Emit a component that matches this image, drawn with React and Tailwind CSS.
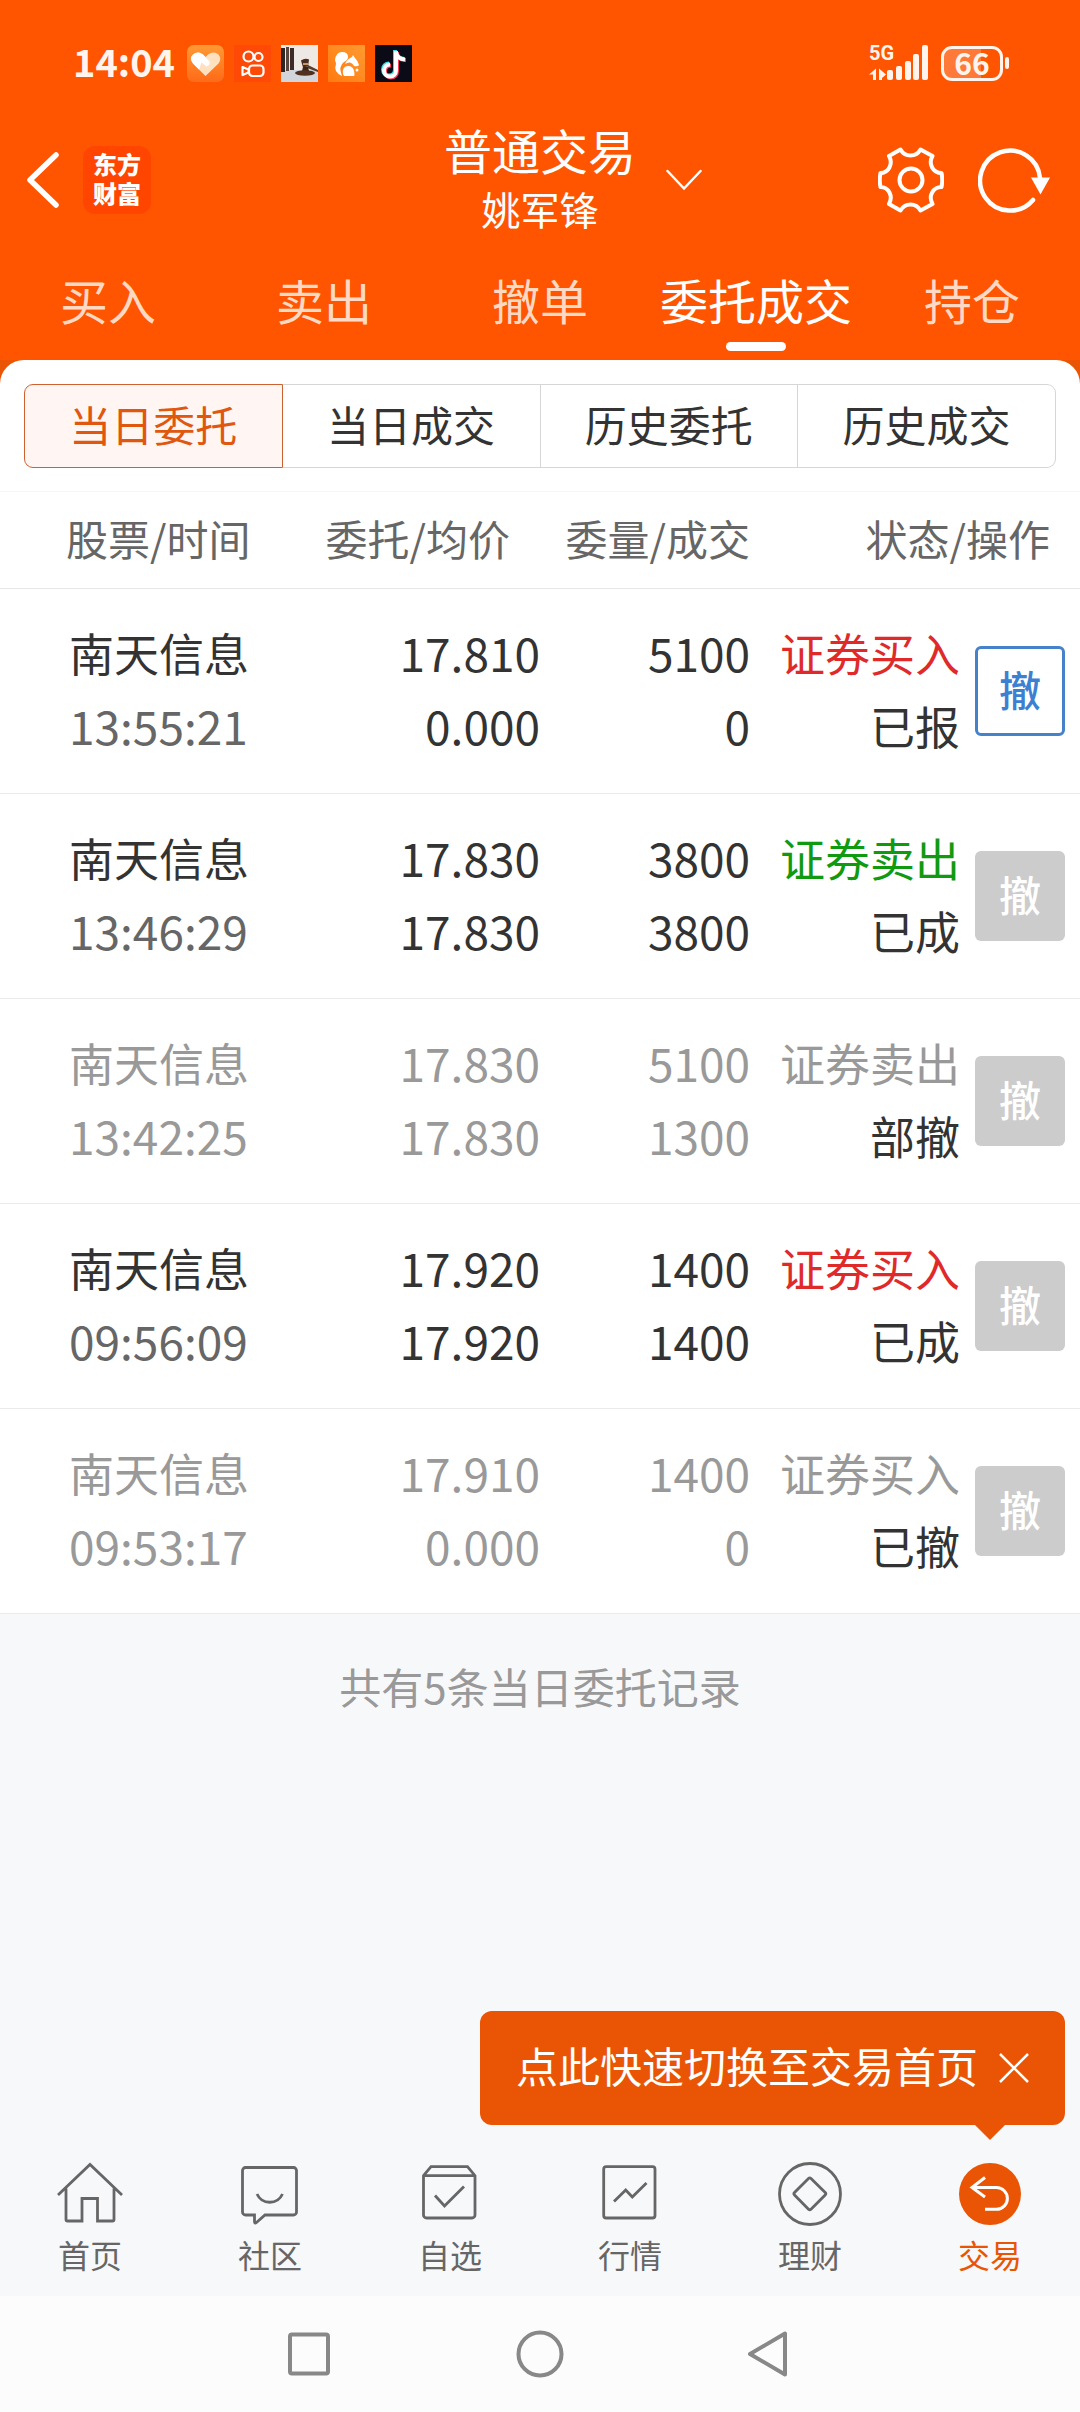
import { useState } from "react";
import clsx from "clsx";

const tabs = ["买入", "卖出", "撤单", "委托成交", "持仓"];
const segments = ["当日委托", "当日成交", "历史委托", "历史成交"];

const orders = [
  { name: "南天信息", time: "13:55:21", price: "17.810", avg: "0.000", amount: "5100", filled: "0", side: "证券买入", status: "已报", open: true },
  { name: "南天信息", time: "13:46:29", price: "17.830", avg: "17.830", amount: "3800", filled: "3800", side: "证券卖出", status: "已成" },
  { name: "南天信息", time: "13:42:25", price: "17.830", avg: "17.830", amount: "5100", filled: "1300", side: "证券卖出", status: "部撤", muted: true },
  { name: "南天信息", time: "09:56:09", price: "17.920", avg: "17.920", amount: "1400", filled: "1400", side: "证券买入", status: "已成" },
  { name: "南天信息", time: "09:53:17", price: "17.910", avg: "0.000", amount: "1400", filled: "0", side: "证券买入", status: "已撤", muted: true },
];

const navIcons = {
  首页: (
    <path d="M1 34 33 3.500l32 30.500M9 27.500V58.500a1.500 1.500 0 0 0 1.500 1.500H25V37.500h15.500V60H55.500a1.500 1.500 0 0 0 1.500-1.500V27.500" />
  ),
  社区: (
    <>
      <path d="M8.500 6.500h48a3 3 0 0 1 3 3v41.500a3 3 0 0 1-3 3H28l-8.500 7.500q-2 1.500-2-1V54h-9a3 3 0 0 1-3-3V9.500a3 3 0 0 1 3-3z" />
      <path d="M20 33c5 11 20.500 11 25.500 0" />
    </>
  ),
  自选: (
    <>
      <path d="M6.500 14.700 14 5.700H50.500l7.500 9V54a3 3 0 0 1-3 3H9.500a3 3 0 0 1-3-3zH58" />
      <path d="M18 34.500 27.500 45 47 25.500" />
    </>
  ),
  行情: (
    <>
      <rect x="6.700" y="5.700" width="51.300" height="51.300" rx="2.500" />
      <path d="m17 40.500 11.700-11.500 6.600 7L49.500 22" />
    </>
  ),
  理财: (
    <>
      <circle cx="33" cy="33" r="30.500" />
      <path d="M31.500 17.500a1.800 1.800 0 0 1 2.500 0l14.200 14a1.800 1.800 0 0 1 0 2.500L34 48.200a1.800 1.800 0 0 1-2.500 0L17.500 34a1.800 1.800 0 0 1 0-2.500z" />
    </>
  ),
  交易: (
    <>
      <circle cx="33" cy="33" r="31" fill="currentColor" stroke="none" />
      <path stroke="#fff" strokeWidth="3" d="M28 16.500 15 26.500l13 9.500M15 26.500h24.500a10.900 10.900 0 0 1 0 21.800H28" />
    </>
  ),
};

function AppBadges() {
  return (
    <div className="flex gap-[10px]">
      <svg className="size-[37px]" viewBox="0 0 37 37">
        <defs>
          <linearGradient id="heartBg" x1="0" y1="0" x2="0" y2="1">
            <stop offset="0" stopColor="#ff9a35" />
            <stop offset="1" stopColor="#ff6a18" />
          </linearGradient>
        </defs>
        <rect width="37" height="37" rx="7" fill="url(#heartBg)" />
        <path d="M18.500 31 6 18.500Q2 13 6 9.500q5-4 10 0l2.500 2.500 2.500-2.500q6-4 10.500 0 3.500 4.500 0 9z" fill="#ffe0bf" />
        <path d="M6 18.500Q2 13 6 9.500q5-4 10 0l6.500 7q1 4-3 5l-5-4-2.500 7z" fill="#fff" />
      </svg>
      <svg className="size-[37px]" viewBox="0 0 37 37" fill="none" stroke="#fff" strokeWidth="2.200" strokeLinejoin="round">
        <rect width="37" height="37" fill="#ff4906" stroke="none" />
        <circle cx="14.500" cy="11.500" r="5" />
        <circle cx="24.500" cy="12" r="4" />
        <rect x="15" y="20.500" width="14.500" height="10.500" rx="3.500" />
        <path d="m8.500 22 6 2.500v3l-6 2.500z" />
      </svg>
      <svg className="size-[37px]" viewBox="0 0 37 37">
        <rect width="37" height="37" fill="#eee9e4" />
        <rect width="37" height="12" y="25" fill="#d3d5dc" />
        <path d="M0 3h4v24H0z" fill="#2c2725" />
        <path d="M5 2h3v24H5z" fill="#5a4740" />
        <path d="M9 3h4v22H9z" fill="#3c2b26" />
        <path d="M20 15.500q4-3 8-1l-1 7-5 1z" fill="#4a2d1c" />
        <path d="M22 18h5v2h-5z" fill="#c79a62" />
        <path d="m27 20 10 5v2l-11-4z" fill="#5b3d2b" />
        <path d="M22 22h5l1 4h-7z" fill="#3c2418" />
        <ellipse cx="24" cy="28" rx="10" ry="2.800" fill="#50301f" />
      </svg>
      <svg className="size-[37px]" viewBox="0 0 37 37">
        <defs>
          <linearGradient id="squirrelBg" x1="0" y1="1" x2="1" y2="0">
            <stop offset="0" stopColor="#ff7a10" />
            <stop offset="1" stopColor="#ff9a30" />
          </linearGradient>
        </defs>
        <rect width="37" height="37" fill="url(#squirrelBg)" />
        <path d="M14 31Q5 27 8 19q0-1-1-4 1-8 7-8 6 0 6 5 0 3-4 5-6 4-2 14z" fill="#fff" />
        <path d="M17 19q2-5 7-7l1-2 2 3q3 3 4 7-1 2-5 1-3-6-9-2z" fill="#fff" />
        <path d="M15 29q-1-8 5-8 5 0 6 5 1 4 0 5H16z" fill="#fff" />
        <circle cx="29" cy="25" r="1.500" fill="#fff" />
      </svg>
      <svg className="size-[37px]" viewBox="0 0 37 37" fill="none" strokeWidth="4">
        <rect width="37" height="37" fill="#0b0b18" />
        <path stroke="#2de2e0" d="M20 5v19.500a6 6 0 1 1-6-6M20 6q1 7 9 8" />
        <path stroke="#fb3a5c" d="M22 7v19.500a6 6 0 1 1-6-6M22 8q1 7 9 7" />
        <path stroke="#fff" d="M21 6v19.500a6 6 0 1 1-6-6M21 7q1 7 9 7.500" />
      </svg>
    </div>
  );
}

function StatusBar() {
  return (
    <div className="flex h-[118px] items-center justify-between pt-2 pl-[73px] pr-[71px] text-[#fff5ee]">
      <div className="flex items-center gap-3">
        <span className="pb-1 text-[38px] leading-[40px] font-bold">14:04</span>
        <AppBadges />
      </div>
      <div className="flex items-center gap-[13px]">
        <div className="relative">
          <span className="absolute -top-[2px] left-0 font-[Roboto] text-[20px] leading-[20px] font-bold">5G</span>
          <svg className="h-[36px] w-[59px]" viewBox="0 0 59 36" fill="currentColor">
            <path d="M0 29.500 7 23.500V35H4v-5.500zM10 23.500 17 29.500 13 33v2h-3z" />
            <rect x="18" y="25" width="6" height="10" rx="2" />
            <rect x="27" y="21" width="6" height="14" rx="2" />
            <rect x="36" y="16" width="6" height="19" rx="2" />
            <rect x="44" y="9" width="6" height="26" rx="2" />
            <rect x="53" y="0" width="6" height="35" rx="2" />
          </svg>
        </div>
        <div className="flex items-center gap-[2px]">
          <div className="flex h-[35px] w-[62px] items-center justify-center rounded-[11px] border-3 border-current bg-linear-to-r from-[#ff7a38] from-66% to-[#ff5500] to-66% pb-[3px] text-[30px] leading-[32px] font-bold">
            66
          </div>
          <div className="h-3 w-1 rounded-sm bg-current"></div>
        </div>
      </div>
    </div>
  );
}

function TitleBar() {
  return (
    <div className="grid h-[120px] grid-cols-[1fr_auto_1fr] items-center text-white">
      <div className="flex items-center gap-6 pl-[26px]">
        <button aria-label="返回">
          <svg className="h-[56px] w-[33px]" viewBox="0 0 33 56" fill="none" stroke="currentColor" strokeWidth="5.500" strokeLinecap="round" strokeLinejoin="round">
            <path d="M30 3 4 28l26 25" />
          </svg>
        </button>
        <div className="flex size-[68px] items-center justify-center rounded-xl bg-[#ff4500] pb-1">
          <p className="w-12 text-[24px] leading-[29px] font-black">东方财富</p>
        </div>
      </div>
      <div className="pb-[5px] text-center">
        <h1 className="text-[48px] leading-[62px]">普通交易</h1>
        <p className="text-[39px] leading-[56px]">姚军锋</p>
      </div>
      <div className="flex items-center justify-between pl-[30px] pr-[28px]">
        <button aria-label="切换账户">
          <svg className="h-[22px] w-[36px]" viewBox="0 0 36 22" fill="none" stroke="currentColor" strokeWidth="2.500" strokeLinecap="round">
            <path d="M1.500 2 18 19.500 34.500 2" />
          </svg>
        </button>
        <div className="flex gap-[34px]">
          <button aria-label="设置">
            <svg className="size-[66px]" viewBox="0 0 66 66" fill="none" stroke="currentColor" strokeWidth="4" strokeLinejoin="round">
              <path d="M22.500 2.500C27 10.500 38 10.500 42.500 2.500L54.500 9C50 17 55 26 63.500 26Q65 33 63.500 40C55 40 50 49 54.500 57L42.500 63.500C38 55.500 27 55.500 22.500 63.500L11 57C15.500 49 10.500 40 2.500 40Q1 33 2.500 26C10.500 26 15.500 17 11 9Z" />
              <circle cx="33" cy="33" r="11.500" />
            </svg>
          </button>
          <button aria-label="刷新">
            <svg className="h-[66px] w-[74px]" viewBox="0 0 74 66" fill="none" stroke="currentColor" strokeWidth="4.500">
              <path d="M62 31A30 30 0 1 0 55 53" strokeLinecap="round" />
              <path d="M53 30.500H72L62.500 47.500z" fill="currentColor" stroke="none" />
            </svg>
          </button>
        </div>
      </div>
    </div>
  );
}

function OrderRow({ order }) {
  const text = order.muted ? "text-[#999]" : "text-[#333]";
  const side = order.side === "证券买入" ? "text-[#e02a2a]" : "text-[#0f9a0f]";

  return (
    <tr className="border-b border-[#ebebeb] text-right text-[45px] leading-[73px]">
      <td className={clsx("pt-[27px] pb-[31px] pl-[69px] text-left", text)}>
        <div>{order.name}</div>
        <div className={clsx("text-[46px]", !order.muted && "text-[#666]")}>{order.time}</div>
      </td>
      <td className={clsx("pt-[27px] pb-[31px] text-[46px]", text)}>
        <div>{order.price}</div>
        <div>{order.avg}</div>
      </td>
      <td className={clsx("pt-[27px] pb-[31px] text-[46px]", text)}>
        <div>{order.amount}</div>
        <div>{order.filled}</div>
      </td>
      <td className="pt-[27px] pb-[31px] text-[#333]">
        <div className={order.muted ? "text-[#999]" : side}>{order.side}</div>
        <div>{order.status}</div>
      </td>
      <td className="pr-[15px] align-middle">
        <button
          disabled={!order.open}
          className={clsx(
            "ml-auto flex size-[90px] items-center justify-center rounded-md pb-1 text-[42px] leading-[60px] font-medium",
            order.open ? "border-3 border-[#4582c9] bg-white text-[#3c80d2]" : "bg-[#ccc] text-white"
          )}
        >
          撤
        </button>
      </td>
    </tr>
  );
}

function BottomNav() {
  const [tip, setTip] = useState(true);

  return (
    <nav className="relative flex">
      {tip ? (
        <div className="absolute right-[15px] bottom-full mb-6 flex h-[114px] items-center gap-[21px] rounded-xl bg-[#e95504] pr-9 pl-9 text-[42px] leading-[60px] whitespace-nowrap text-white">
          <span className="pb-[6px]">点此快速切换至交易首页</span>
          <button aria-label="关闭" onClick={() => setTip(false)}>
            <svg className="size-[30px]" viewBox="0 0 30 30" fill="none" stroke="currentColor" strokeWidth="2.500">
              <path d="m1 1 28 28M29 1 1 29" />
            </svg>
          </button>
          <svg className="absolute top-full right-[60px] h-[15px] w-[30px]" viewBox="0 0 30 15" fill="#e95504">
            <path d="M0 0h30L15 15z" />
          </svg>
        </div>
      ) : null}
      {Object.keys(navIcons).map((label) => (
        <a
          key={label}
          href="#"
          className={clsx(
            "flex flex-1 flex-col items-center gap-[7px] pt-3 pb-[22px] text-[32px] leading-[40px]",
            label === "交易" ? "text-[#e95504]" : "text-[#666]"
          )}
        >
          <svg className="size-[66px]" viewBox="0 0 66 66" fill="none" stroke="currentColor" strokeWidth="2.800">
            {navIcons[label]}
          </svg>
          {label}
        </a>
      ))}
    </nav>
  );
}

function SystemNav() {
  return (
    <div className="flex h-[116px] items-center justify-center gap-[182px] bg-[#fcfcfc] text-[#888]">
      <button aria-label="最近任务">
        <svg className="size-[48px]" viewBox="0 0 48 48" fill="none" stroke="currentColor" strokeWidth="4">
          <rect x="4" y="4.500" width="38" height="39" rx="2" />
        </svg>
      </button>
      <button aria-label="主屏幕">
        <svg className="size-[48px]" viewBox="0 0 48 48" fill="none" stroke="currentColor" strokeWidth="4">
          <circle cx="24" cy="24" r="21.500" />
        </svg>
      </button>
      <button aria-label="后退">
        <svg className="size-[48px]" viewBox="0 0 48 48" fill="none" stroke="currentColor" strokeWidth="4" strokeLinejoin="round">
          <path d="M39 3.500v41L4 24z" />
        </svg>
      </button>
    </div>
  );
}

export default function App() {
  const [tab, setTab] = useState("委托成交");
  const [segment, setSegment] = useState("当日委托");

  return (
    <div className="flex min-h-screen flex-col bg-[#f7f8fa] font-['Noto_Sans_CJK_SC',sans-serif]">
      <header className="bg-[#ff5500]">
        <StatusBar />
        <TitleBar />
        <div className="flex">
          {tabs.map((t) => (
            <button
              key={t}
              onClick={() => setTab(t)}
              className={clsx(
                "flex flex-1 flex-col items-center gap-[13px] pt-[31px] pb-[9px] text-[48px] leading-[60px] whitespace-nowrap",
                t === tab ? "text-white" : "text-[#ffd9c4]"
              )}
            >
              {t}
              <span className={clsx("h-[9px] w-[60px] rounded-full", t === tab && "bg-white")}></span>
            </button>
          ))}
        </div>
      </header>

      <main className="flex-1">
        <div className="bg-[#e95504]">
          <div className="rounded-t-3xl border-b border-[#f6f6f6] bg-white px-6 pt-6 pb-[23px]">
            <div className="flex">
              {segments.map((s) => (
                <button
                  key={s}
                  onClick={() => setSegment(s)}
                  className={clsx(
                    "h-[84px] flex-1 border pb-1 text-[42px] leading-[60px] not-first:border-l-0 first:rounded-l-[9px] last:rounded-r-[9px]",
                    s === segment ? "border-[#cc6230] bg-[#fff6f3] text-[#e05810]" : "border-[#d6d6d6] text-[#333]"
                  )}
                >
                  {s}
                </button>
              ))}
            </div>
          </div>
        </div>

        <table className="w-full table-fixed border-collapse bg-white">
          <colgroup>
            <col />
            <col />
            <col className="w-[210px]" />
            <col className="w-[210px]" />
            <col className="w-[120px]" />
          </colgroup>
          <thead>
            <tr className="h-24 border-b border-[#e6e6e6] text-right text-[42px] leading-[60px] text-[#666]">
              <th className="pb-1 pl-[66px] text-left font-normal">股票/时间</th>
              <th className="pr-[30px] pb-1 font-normal">委托/均价</th>
              <th className="pb-1 font-normal">委量/成交</th>
              <th className="pr-[30px] pb-1 font-normal" colSpan={2}>状态/操作</th>
            </tr>
          </thead>
          <tbody>
            {orders.map((order) => (
              <OrderRow key={order.time} order={order} />
            ))}
          </tbody>
        </table>

        <p className="pt-[42px] text-center text-[42px] leading-[60px] text-[#999]">共有5条当日委托记录</p>
      </main>

      <BottomNav />
      <SystemNav />
    </div>
  );
}
